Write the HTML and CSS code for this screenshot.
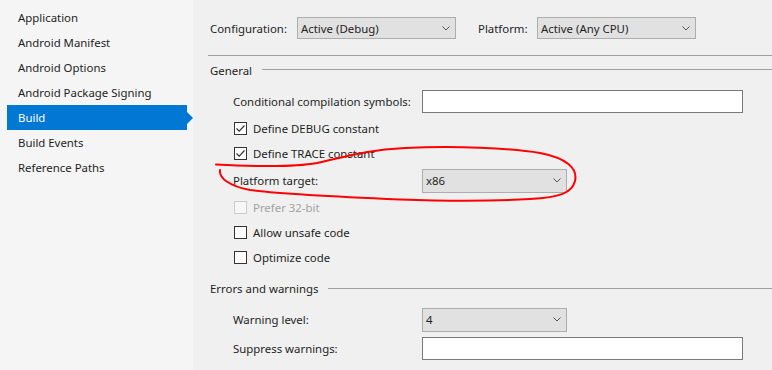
FILE: index.html
```html
<!DOCTYPE html>
<html>
<head>
<meta charset="utf-8">
<link rel="stylesheet" href="styles.css">
</head>
<body>
<div class="page">
  <nav class="sidebar">
    <div class="nav-item">Application</div>
    <div class="nav-item">Android Manifest</div>
    <div class="nav-item">Android Options</div>
    <div class="nav-item">Android Package Signing</div>
    <div class="nav-item active">Build</div>
    <div class="nav-item">Build Events</div>
    <div class="nav-item">Reference Paths</div>
  </nav>
  <main class="main">
    <div class="toolbar">
      <span class="tb-label cfg">Configuration:</span>
      <div class="select tb-select"><span>Active (Debug)</span><svg class="chev" width="8" height="5" viewBox="0 0 8 5"><path d="M0.5 0.5 L4 4 L7.5 0.5" fill="none" stroke="#555" stroke-width="1"/></svg></div>
      <span class="tb-label plat">Platform:</span>
      <div class="select tb-select"><span>Active (Any CPU)</span><svg class="chev" width="8" height="5" viewBox="0 0 8 5"><path d="M0.5 0.5 L4 4 L7.5 0.5" fill="none" stroke="#555" stroke-width="1"/></svg></div>
    </div>

    <section class="group">
      <div class="group-head"><span>General</span><span class="rule"></span></div>
      <div class="group-body">
        <div class="row ctl">
          <span class="label">Conditional compilation symbols:</span>
          <div class="input wide"></div>
        </div>
        <div class="row chk">
          <span class="box"><svg width="11" height="11" viewBox="0 0 11 11"><path d="M1.5 5.5 L4.2 8.2 L9.5 2.5" fill="none" stroke="#333" stroke-width="1.2"/></svg></span>
          <span>Define DEBUG constant</span>
        </div>
        <div class="row chk">
          <span class="box"><svg width="11" height="11" viewBox="0 0 11 11"><path d="M1.5 5.5 L4.2 8.2 L9.5 2.5" fill="none" stroke="#333" stroke-width="1.2"/></svg></span>
          <span>Define TRACE constant</span>
        </div>
        <div class="row ctl">
          <span class="label">Platform target:</span>
          <div class="select narrow"><span>x86</span><svg class="chev" width="8" height="5" viewBox="0 0 8 5"><path d="M0.5 0.5 L4 4 L7.5 0.5" fill="none" stroke="#555" stroke-width="1"/></svg></div>
        </div>
        <div class="row chk disabled">
          <span class="box"></span>
          <span>Prefer 32-bit</span>
        </div>
        <div class="row chk">
          <span class="box"></span>
          <span>Allow unsafe code</span>
        </div>
        <div class="row chk">
          <span class="box"></span>
          <span>Optimize code</span>
        </div>
      </div>
    </section>

    <section class="group second">
      <div class="group-head"><span>Errors and warnings</span><span class="rule"></span></div>
      <div class="group-body">
        <div class="row ctl">
          <span class="label">Warning level:</span>
          <div class="select narrow"><span>4</span><svg class="chev" width="8" height="5" viewBox="0 0 8 5"><path d="M0.5 0.5 L4 4 L7.5 0.5" fill="none" stroke="#555" stroke-width="1"/></svg></div>
        </div>
        <div class="row ctl">
          <span class="label">Suppress warnings:</span>
          <div class="input wide"></div>
        </div>
      </div>
    </section>
  </main>
</div>
<svg class="annot" width="772" height="370" viewBox="0 0 772 370">
  <path d="M216 164.5 C245 166 290 168 317 163 C345 157 365 150 405 148 C455 145.5 510 148 540 153 C566 158 578 168 575 181 C572 193 560 197.5 530 199 C490 201.5 440 201 400 199.5 C330 196.5 280 194 250 190 C229 186 219 178 220 170" fill="none" stroke="#f00" stroke-width="2" stroke-linecap="round"/>
</svg>
</body>
</html>
```

FILE: styles.css
```css
* { box-sizing: border-box; }
html, body { margin: 0; padding: 0; }
body {
  width: 772px;
  height: 370px;
  overflow: hidden;
  position: relative;
  font-family: "Noto Sans", "Open Sans", sans-serif;
  font-size: 11.4px;
  color: #1e1e1e;
  background: #f0f0f0;
}
.page { display: flex; height: 370px; }

.sidebar {
  width: 193px;
  flex: none;
  background: #f5f5f5;
  padding: 5px 0 0 7px;
}
.nav-item {
  position: relative;
  width: 180px;
  height: 25px;
  line-height: 25px;
  padding-left: 11px;
  white-space: nowrap;
}
.nav-item.active {
  background: #0078d4;
  color: #fff;
}
.nav-item.active::after {
  content: "";
  position: absolute;
  left: 180px;
  top: 6.5px;
  border-left: 6px solid #0078d4;
  border-top: 6px solid transparent;
  border-bottom: 6px solid transparent;
}

.main { flex: 1; padding-left: 15px; }

.toolbar {
  display: flex;
  align-items: center;
  height: 56px;
  padding-top: 1px;
  padding-left: 2px;
  border-bottom: 1px solid #a0a0a0;
}
.tb-label { white-space: nowrap; }
.tb-label.cfg { width: 87px; }
.tb-label.plat { width: 59px; margin-left: 22px; }

.select {
  display: flex;
  align-items: center;
  justify-content: space-between;
  background: #e1e1e1;
  border: 1px solid #adadad;
  padding: 0 5px 0 3px;
}
.tb-select { width: 159px; height: 22px; }
.select.narrow { width: 145px; height: 24px; }
.chev { flex: none; }

.group-head {
  display: flex;
  align-items: center;
  height: 28px;
  padding-left: 2px;
}
.group-head .rule {
  flex: 1;
  height: 1px;
  background: #a0a0a0;
  margin-left: 10px;
}
.group:first-of-type .group-head .rule { margin-top: -2px; }
.group.second { margin-top: 4px; }
.group-body { padding: 3px 0 0 25px; }

.row { display: flex; align-items: center; }
.row.ctl { height: 29px; }
.row.chk { height: 25px; }
.label { width: 189px; flex: none; white-space: nowrap; }

.input {
  background: #fff;
  border: 1px solid #7a7a7a;
  height: 23px;
}
.input.wide { width: 321px; }

.box {
  width: 13px;
  height: 13px;
  border: 1px solid #333;
  background: #fff;
  margin: 0 6px 0 1px;
  display: flex;
  align-items: center;
  justify-content: center;
}
.disabled { color: #a2a2a2; }
.disabled .box { border-color: #cccccc; background: #f7f7f7; }

.annot {
  position: absolute;
  left: 0;
  top: 0;
  pointer-events: none;
}
```
